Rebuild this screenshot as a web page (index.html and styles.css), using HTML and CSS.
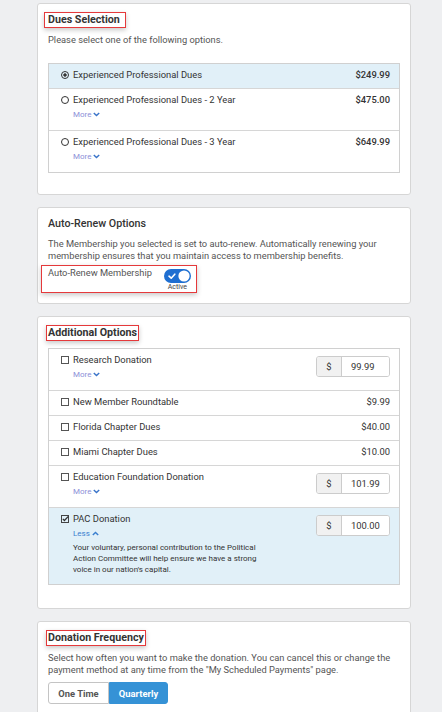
FILE: index.html
```html
<!DOCTYPE html>
<html lang="en">
<head>
<meta charset="utf-8">
<title>Membership Options</title>
<link rel="stylesheet" href="styles.css">
</head>
<body>
<main class="page">

  <section class="card">
    <h2 class="card-title"><span class="title-box flagged wide">Dues Selection</span></h2>
    <p class="card-text">Please select one of the following options.</p>
    <ul class="option-list dues">
      <li class="option selected">
        <div class="option-main">
          <div class="option-head"><span class="radio checked"></span><span>Experienced Professional Dues</span></div>
        </div>
        <span class="price">$249.99</span>
      </li>
      <li class="option">
        <div class="option-main">
          <div class="option-head"><span class="radio"></span><span>Experienced Professional Dues - 2 Year</span></div>
          <a class="toggle-link more">More <svg width="7" height="5" viewBox="0 0 7 5"><polyline points="0.8,0.9 3.5,3.6 6.2,0.9" fill="none" stroke="#3a74c9" stroke-width="1.4"/></svg></a>
        </div>
        <span class="price">$475.00</span>
      </li>
      <li class="option">
        <div class="option-main">
          <div class="option-head"><span class="radio"></span><span>Experienced Professional Dues - 3 Year</span></div>
          <a class="toggle-link more">More <svg width="7" height="5" viewBox="0 0 7 5"><polyline points="0.8,0.9 3.5,3.6 6.2,0.9" fill="none" stroke="#3a74c9" stroke-width="1.4"/></svg></a>
        </div>
        <span class="price">$649.99</span>
      </li>
    </ul>
  </section>

  <section class="card">
    <h2 class="card-title plain"><span class="title-box">Auto-Renew Options</span></h2>
    <p class="card-text">The Membership you selected is set to auto-renew. Automatically renewing your membership ensures that you maintain access to membership benefits.</p>
    <div class="renew">
      <span class="renew-label">Auto-Renew Membership</span>
      <div class="switch-wrap">
        <svg class="switch" width="27" height="14" viewBox="0 0 27 14">
          <rect x="0" y="0" width="27" height="14" rx="7" fill="#1f6fd1"/>
          <circle cx="20" cy="7" r="5.6" fill="#fff"/>
          <polyline points="5,7.2 7.2,9.2 10.8,5.2" fill="none" stroke="#fff" stroke-width="1.6" stroke-linecap="round" stroke-linejoin="round"/>
        </svg>
        <span class="switch-state">Active</span>
      </div>
    </div>
  </section>

  <section class="card">
    <h2 class="card-title"><span class="title-box flagged">Additional Options</span></h2>
    <ul class="option-list extras">
      <li class="option">
        <div class="option-main">
          <div class="option-head"><span class="check"></span><span>Research Donation</span></div>
          <a class="toggle-link more">More <svg width="7" height="5" viewBox="0 0 7 5"><polyline points="0.8,0.9 3.5,3.6 6.2,0.9" fill="none" stroke="#3a74c9" stroke-width="1.4"/></svg></a>
        </div>
        <div class="amount"><span class="currency">$</span><span class="value">99.99</span></div>
      </li>
      <li class="option">
        <div class="option-main">
          <div class="option-head"><span class="check"></span><span>New Member Roundtable</span></div>
        </div>
        <span class="price">$9.99</span>
      </li>
      <li class="option">
        <div class="option-main">
          <div class="option-head"><span class="check"></span><span>Florida Chapter Dues</span></div>
        </div>
        <span class="price">$40.00</span>
      </li>
      <li class="option">
        <div class="option-main">
          <div class="option-head"><span class="check"></span><span>Miami Chapter Dues</span></div>
        </div>
        <span class="price">$10.00</span>
      </li>
      <li class="option">
        <div class="option-main">
          <div class="option-head"><span class="check"></span><span>Education Foundation Donation</span></div>
          <a class="toggle-link more">More <svg width="7" height="5" viewBox="0 0 7 5"><polyline points="0.8,0.9 3.5,3.6 6.2,0.9" fill="none" stroke="#3a74c9" stroke-width="1.4"/></svg></a>
        </div>
        <div class="amount"><span class="currency">$</span><span class="value">101.99</span></div>
      </li>
      <li class="option selected">
        <div class="option-main">
          <div class="option-head">
            <svg class="check-on" width="8" height="8" viewBox="0 0 8 8"><rect x="0.5" y="0.5" width="7" height="7" fill="none" stroke="#444" stroke-width="1"/><polyline points="1.8,3.9 3.4,5.5 7.4,1.4" fill="none" stroke="#333" stroke-width="1.3"/></svg>
            <span>PAC Donation</span>
          </div>
          <a class="toggle-link less">Less <svg width="7" height="5" viewBox="0 0 7 5"><polyline points="0.8,4.1 3.5,1.4 6.2,4.1" fill="none" stroke="#3a7fcf" stroke-width="1.4"/></svg></a>
          <p class="note">Your voluntary, personal contribution to the Political Action Committee will help ensure we have a strong voice in our nation's capital.</p>
        </div>
        <div class="amount"><span class="currency">$</span><span class="value">100.00</span></div>
      </li>
    </ul>
  </section>

  <section class="card">
    <h2 class="card-title"><span class="title-box flagged">Donation Frequency</span></h2>
    <p class="card-text">Select how often you want to make the donation. You can cancel this or change the payment method at any time from the "My Scheduled Payments" page.</p>
    <div class="freq">
      <button class="freq-btn" type="button">One Time</button>
      <button class="freq-btn active" type="button">Quarterly</button>
    </div>
  </section>

</main>
</body>
</html>
```

FILE: styles.css
```css
body {
  margin: 0;
  background: #eeeff1;
  font-family: Roboto, "Liberation Sans", Arial, sans-serif;
  color: #333;
}

.page {
  width: 374px;
  padding: 3px 0 60px 37px;
  display: flex;
  flex-direction: column;
  gap: 12px;
}

.card {
  background: #fff;
  border: 1px solid #d6d6d6;
  border-radius: 3px;
  padding: 8px 10px 10px;
}

.card-title {
  margin: 0;
  font-size: 10.7px;
  line-height: 14px;
  font-weight: 700;
  color: #333;
}

.card-title.plain {
  font-weight: 500;
}

.title-box {
  display: inline-block;
  border: 1px solid transparent;
  padding: 0 1px;
  margin-left: -2px;
}

.title-box.flagged {
  border-color: #e5393b;
  box-shadow: 0 2px 5px rgba(0, 0, 0, 0.22);
}

.title-box.wide {
  padding: 0 5px 0 3px;
  margin-left: -4px;
}

.card-text {
  margin: 6px 0 0;
  font-size: 9.3px;
  line-height: 12px;
  color: #555;
}

/* option lists */
.option-list {
  list-style: none;
  margin: 17px 0 11px;
  padding: 0;
  border: 1px solid #d0d0d0;
}

.option-list.extras {
  margin: 7px 0 13px;
}

.option {
  display: flex;
  justify-content: space-between;
  align-items: flex-start;
  padding: 5px 9px 7px 12px;
  border-top: 1px solid #d6d6d6;
  font-size: 9.4px;
  line-height: 12px;
  color: #333;
}

.option:first-child {
  border-top: 0;
}

.option.selected {
  background: #e1f0f8;
}

.option-head {
  display: flex;
  align-items: center;
  gap: 4px;
}

.radio {
  width: 8px;
  height: 8px;
  box-sizing: border-box;
  border: 1px solid #333;
  border-radius: 50%;
}

.radio.checked {
  background: radial-gradient(circle, #333 0 1.4px, transparent 1.9px);
}

.check {
  width: 8px;
  height: 8px;
  box-sizing: border-box;
  border: 1px solid #555;
  background: #fff;
}

.check-on {
  display: block;
}

.toggle-link {
  display: flex;
  align-items: center;
  gap: 2px;
  margin: 3px 0 3px 12px;
  font-size: 8px;
  line-height: 11px;
}

.toggle-link.more {
  color: #8c8fd8;
}

.toggle-link.less {
  color: #3a7fcf;
}

.price {
  font-weight: 400;
}

.dues .price {
  font-weight: 500;
}

.note {
  width: 190px;
  margin: 0 0 2px 12px;
  font-size: 8px;
  line-height: 11.3px;
  color: #333;
}

.amount {
  display: flex;
  width: 74px;
  height: 21px;
  margin-top: 2.5px;
  box-sizing: border-box;
  border: 1px solid #cccccc;
  border-radius: 3px;
  overflow: hidden;
  background: #fff;
}

.currency {
  width: 24px;
  display: flex;
  align-items: center;
  justify-content: center;
  background: #f1f1f1;
  border-right: 1px solid #cccccc;
}

.value {
  flex: 1;
  display: flex;
  align-items: center;
  padding-left: 9px;
  background: #fff;
}

/* auto-renew switch */
.renew {
  display: flex;
  width: fit-content;
  align-items: flex-start;
  margin: 3px 0 0 -7px;
  padding: 1px 5px 1px 6px;
  border: 1px solid #e5393b;
  box-shadow: 0 2px 5px rgba(0, 0, 0, 0.22);
}

.renew-label {
  margin-right: 12px;
  font-size: 9.3px;
  line-height: 12px;
  color: #555;
}

.switch-wrap {
  display: flex;
  flex-direction: column;
  align-items: center;
  padding-top: 1.5px;
}

.switch {
  display: block;
}

.switch-state {
  font-size: 7px;
  line-height: 8px;
  color: #444;
}

/* frequency buttons */
.freq {
  display: flex;
  margin-top: 6px;
}

.freq-btn {
  height: 22px;
  padding: 0;
  font-family: inherit;
  font-size: 9.4px;
  font-weight: 700;
  border: 1px solid #c4c4c4;
  background: #fff;
  color: #555;
}

.freq-btn:first-child {
  width: 61px;
  border-radius: 3px 0 0 3px;
}

.freq-btn.active {
  width: 59px;
  background: #3592d6;
  border-color: #3592d6;
  color: #fff;
  border-radius: 0 3px 3px 0;
}
```
